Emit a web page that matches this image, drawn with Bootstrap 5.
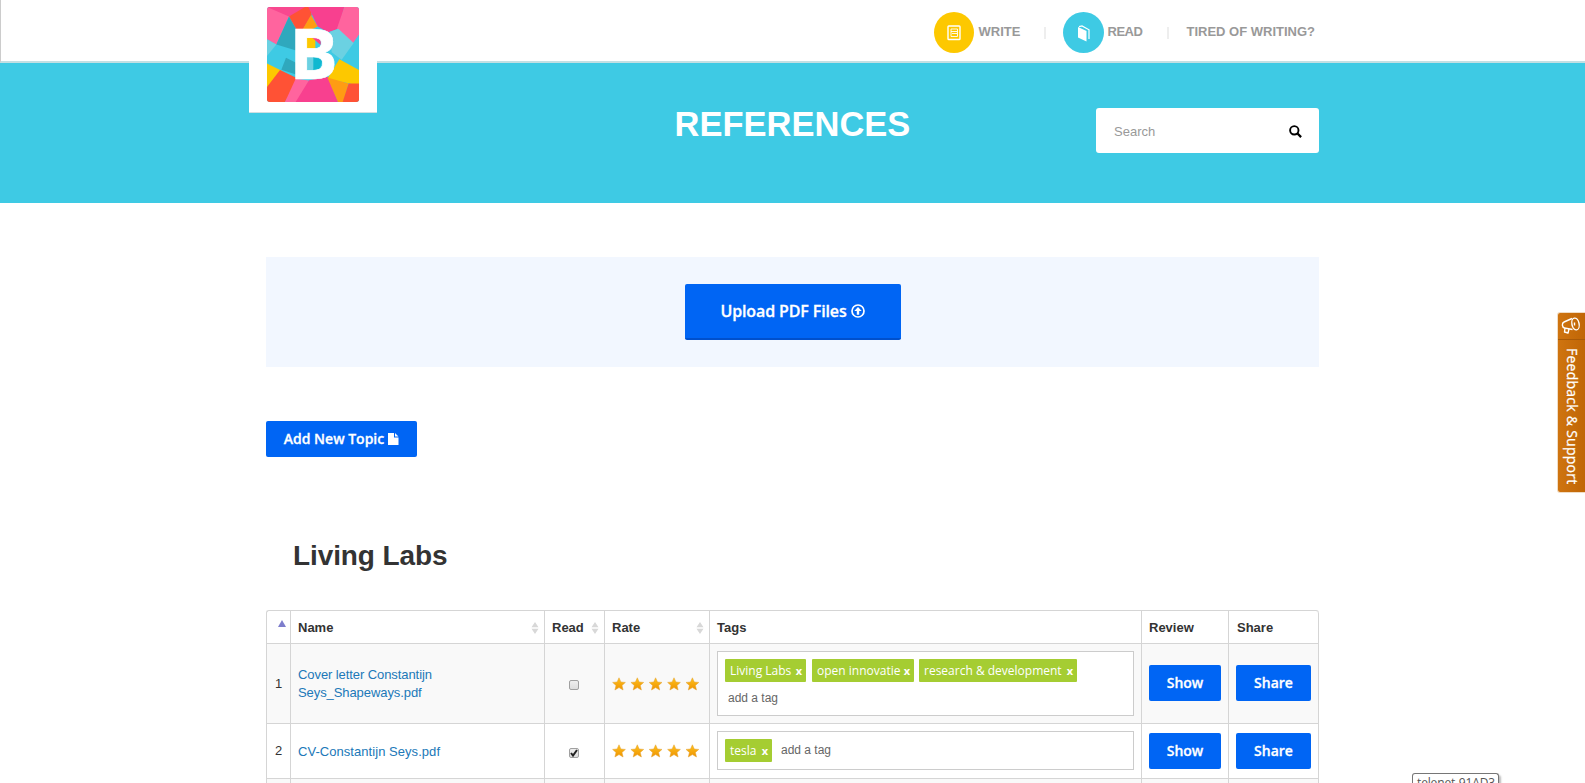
<!DOCTYPE html>
<html lang="en">
<head>
<meta charset="utf-8">
<meta name="viewport" content="width=device-width, initial-scale=1">
<title>References</title>
<link href="https://cdn.jsdelivr.net/npm/bootstrap@5.3.0/dist/css/bootstrap.min.css" rel="stylesheet">
<style>
html{overflow:hidden}
body{font-family:"Liberation Sans",Arial,sans-serif;font-size:13px;line-height:18px;color:#333;height:783px;overflow:hidden;background:#fff}
.wrap{width:1053px;margin:0 auto}
.topbar{height:63px;border-bottom:2px solid #c3dfe3;border-left:1px solid #ccc}
.brand-box{width:128px;height:113px;left:249px;top:0;border-bottom:1px solid #cfdfe2;background:#fff;padding:7px 0 0 18px}
.brand-box svg{display:block}
.menu{padding-left:667px}
.menu a{color:#999;font-weight:700;text-decoration:none;line-height:64px;white-space:nowrap;height:63px;gap:5px;display:flex;align-items:center}
.menu svg{display:block;margin-top:2px}
.menu i{width:2px;height:12px;background:#eee;align-self:center;margin-top:2px}
.menu .m-write{width:110px}
.menu .m-read{width:104px;margin-left:17px;gap:4px;letter-spacing:-.5px}
.menu .m-tired{margin-left:18px}
.hero{height:140px;background:#3ecae4}
.hero h1{font-size:34.500px;font-weight:700;line-height:40px;color:#fff;padding-top:41px}
.search{width:223px;height:45px;right:0;top:45px;border-radius:3px;background:#fff;color:#999;padding:2px 17px 0 18px}
.upload-area{height:110px;margin-top:54px;background:#f2f7ff}
.act{background:#0065f4;color:#fff;font-family:"Open Sans",sans-serif;font-weight:600;-webkit-text-stroke:.3px #fff;font-size:14px;line-height:20px;border:0;border-radius:2px;padding:0;height:36px;display:flex;align-items:center;justify-content:center;white-space:nowrap}
.act:hover{background:#0058d6;color:#fff}
.act-lg{width:216px;height:56px;font-size:16px;border-bottom:2px solid #0050cc;gap:4px;letter-spacing:-.12px}
.act-topic{width:151px;gap:4px;margin-top:54px}
h2{font-size:28px;font-weight:700;line-height:34px;margin:82px 0 0 27px;color:#333;letter-spacing:-.1px}
.refs{width:1053px;table-layout:fixed;border-collapse:separate;border-spacing:0;border:1px solid #d5d5d5;border-width:1px 0 0 1px;border-radius:3px 3px 0 0;margin-top:37px}
.refs th,.refs td{border:1px solid #d5d5d5;border-width:0 1px 1px 0;padding:0 7px;vertical-align:middle}
.refs th{height:33px;padding-top:1px}
.refs .r1 td{height:80px;background:#f9f9f9}
.refs .r2 td{height:55px}
.refs .r3 td{height:60px;background:#f9f9f9}
.refs th:last-child{border-top-right-radius:3px;padding-left:8px}
.refs td.c-tags{vertical-align:top;padding-top:7px}
.refs .r1 .act{margin-top:-1px}
.refs a{color:#2078b8;text-decoration:none}
.refs .r1 a{letter-spacing:-.08px}
.refs .r2 a{letter-spacing:.05px;position:relative;top:1px}
.refs .sorter{margin-right:-2px}
.refs .asc{margin:-7px 0 0 11px}
.tagbox{border:1px solid #ccc;background:#fff;padding:7px;display:flex;flex-wrap:wrap;align-items:flex-start;align-content:flex-start;font-size:12px;width:417px}
.tagbox.tall{height:65px}
.tagbox.short{height:39px}
.tg{background:#a5cd32;color:#fff;font-family:"Open Sans",sans-serif;height:23px;line-height:23px;padding:0 4px 0 5px;display:flex;justify-content:space-between;border-radius:1px;white-space:nowrap}
.tg b{font-size:11px;line-height:24px}
.addtag{color:#666;line-height:16px;padding:3px 0 0 9px}
.tall .addtag{padding:8px 0 0 3px}
.box{width:10px;height:10px;border:1px solid #a0a0a0;border-radius:2px;background:linear-gradient(#eee,#ddd);margin:3px 0 0 17px;display:block}
.box svg{display:block;overflow:visible}
.feedback{right:0;top:313px;width:27px;height:179px;background:linear-gradient(90deg,#cf7410,#c06606);box-shadow:0 0 0 1px #f0dcc4;color:#fff;border-radius:2px 0 0 2px}
.feedback div{height:27px;border-bottom:1px solid #a85a08}
.feedback span{writing-mode:vertical-rl;font-family:"Open Sans",sans-serif;font-size:14px;line-height:29px;-webkit-text-stroke:.25px #fff;padding-top:8px;white-space:nowrap;letter-spacing:.25px}
.tip{left:1412px;top:773px;width:87px;height:10px;border:1px solid #767676;border-bottom:0;border-radius:3px 3px 0 0;background:#fff;color:#555;font:12px/15px "Open Sans",sans-serif;padding:1px 4px;white-space:nowrap;box-shadow:2px 2px 2px #bbb;letter-spacing:-.15px}
</style>
</head>
<body class="position-relative">
<svg class="position-absolute" width="0" height="0">
  <defs>
  <symbol id="sort" viewBox="0 0 8 12"><path fill="#d8d8d8" d="M4 0 7.500 5.300H.5zM4 12 .5 6.700h7z"/></symbol>
  <linearGradient id="gold" x2="0" y2="1"><stop stop-color="#ffc21f"/><stop offset="1" stop-color="#ee9300"/></linearGradient>
  <symbol id="stars" viewBox="0 0 88 14">
    <g fill="url(#gold)" stroke="#e3a335" stroke-width=".5">
      <path id="star" d="m7 .8 1.900 4.200 4.500.4-3.400 3 1.100 4.600L7 10.600 2.900 13 4 8.400.6 5.400l4.500-.4z"/>
      <use href="#star" x="18.300"/><use href="#star" x="36.600"/><use href="#star" x="55"/><use href="#star" x="73.400"/>
    </g>
  </symbol>
  </defs>
</svg>

<header class="topbar">
  <nav class="wrap menu d-flex">
    <a href="#" class="m-write">
      <svg width="40" height="41" viewBox="0 0 40 41"><ellipse cx="20" cy="20.500" rx="20" ry="20.500" fill="#fdc800"/><g fill="none" stroke="#fff"><rect x="14" y="14" width="12" height="13.500" rx=".8" stroke-width="1.400"/><path d="M17 17h6.500v7.500H17zM17 19.500h6M18 21.500h5" stroke-width=".9"/></g></svg>WRITE</a>
    <i></i>
    <a href="#" class="m-read">
      <svg width="41" height="41" viewBox="0 0 41 41"><circle cx="20.500" cy="20.500" r="20.500" fill="#3ecae4"/><path fill="#fff" d="m15 15 8.500 4v10.500L15 25.500z"/><path fill="none" stroke="#fff" stroke-width="1.200" d="m16 14.700 3-.7 7 3.800V27"/></svg>READ</a>
    <i></i>
    <a href="#" class="m-tired">TIRED OF WRITING?</a>
  </nav>
</header>
<div class="brand-box position-absolute">
  <svg width="92" height="95" viewBox="81 22 276 283" preserveAspectRatio="none">
    <defs><clipPath id="rc"><rect x="81" y="22" width="276" height="283" rx="8"/></clipPath></defs>
    <g clip-path="url(#rc)">
      <path fill="#3ecae4" d="M81 22h276v283H81z"/>
      <path fill="#ff649e" d="M81 22h130l-64 28-38 84-28-16z"/>
      <path fill="#f8488f" d="M81 22h118l-8 14-44 14z"/>
      <path fill="#2fa8bd" d="m147 50 24 42v60l-62-18z"/>
      <path fill="#ff5235" d="m147 50 48-28h16l4 24-26 42h-20z"/>
      <path fill="#ff9c13" d="m213 46 20 34-25 12h-22z"/>
      <path fill="#f8408f" d="M205 22h108l-18 65-30 10-32-17z"/>
      <path fill="#ff649e" d="M313 22h44v82l-20 28-46-46z"/>
      <path fill="#6bd1e2" d="m270 96 25-9 46 42-36 50-30-22z"/>
      <path fill="#6bd1e2" d="m81 118 28 16-28 34z"/>
      <path fill="#2fa8bd" d="m138 173 30 15v35l-44-14z"/>
      <path fill="#fdc800" d="m81 190 44 22-44 50zM298 178l59 32v46l-95-20z"/>
      <path fill="#ff5235" d="m120 210 55 26-40 69H81v-45z"/>
      <path fill="#ff649e" d="m167 236 40 5-30 64h-42z"/>
      <path fill="#f8408f" d="m207 240 57-10 30 75H167z"/>
      <path fill="#ff9c13" d="m262 232 64 18-16 55h-16z"/>
      <path fill="#ff5235" d="M326 250h31v55h-49z"/>
      <path fill="#fdc800" d="M198 112h28v36h-28z"/><path fill="#f8408f" d="m215 112 27-2v25z"/><path fill="#6bd1e2" d="M198 170h26v42h-26z"/><path fill="#10b8d0" d="m220 170 27 10-8 28-19 2z"/>
      <text x="148" y="237" font-family="Open Sans" font-weight="700" font-size="209" fill="#fff" stroke="#fff" stroke-width="2" textLength="146" lengthAdjust="spacingAndGlyphs">B</text>
    </g>
  </svg>
</div>

<section class="hero">
  <div class="wrap position-relative">
    <h1 class="text-center m-0">REFERENCES</h1>
    <div class="search position-absolute d-flex align-items-center justify-content-between"><span>Search</span>
      <svg width="13" height="13" viewBox="0 0 13 13"><g fill="none" stroke="#000"><circle cx="5.300" cy="5.300" r="4.200" stroke-width="1.900"/><path d="m8.500 8.500 3.600 3.600" stroke-width="2.300"/></g></svg></div>
  </div>
</section>

<main class="wrap">
  <div class="upload-area d-flex align-items-center justify-content-center">
    <button class="btn act act-lg" type="button">Upload PDF Files
      <svg width="14" height="14" viewBox="0 0 14 14"><circle cx="7" cy="7" r="6" fill="none" stroke="#fff" stroke-width="1.700"/><path fill="#fff" d="m7 3 3.700 4H8.200v3.700H5.800V7H3.300z"/></svg></button>
  </div>
  <button class="btn act act-topic" type="button">Add New Topic
    <svg width="11" height="12" viewBox="0 0 11 12"><path fill="#fff" d="M0 0h6v4.500h4.500V12H0zM7 0l3.500 3.500H7z"/></svg></button>
  <h2>Living Labs</h2>

  <table class="refs">
    <colgroup><col style="width:24px"><col style="width:254px"><col style="width:60px"><col style="width:105px"><col style="width:432px"><col style="width:87px"><col style="width:90px"></colgroup>
    <thead><tr>
      <th class="p-0"><svg class="d-block asc" width="8" height="7" viewBox="0 0 8 7"><path fill="#7d7dcc" d="m4 0 4 7H0z"/></svg></th>
      <th><div class="d-flex justify-content-between align-items-center">Name<svg class="sorter" width="8" height="12"><use href="#sort"/></svg></div></th>
      <th><div class="d-flex justify-content-between align-items-center">Read<svg class="sorter" width="8" height="12"><use href="#sort"/></svg></div></th>
      <th><div class="d-flex justify-content-between align-items-center">Rate<svg class="sorter" width="8" height="12"><use href="#sort"/></svg></div></th>
      <th>Tags</th><th>Review</th><th>Share</th>
    </tr></thead>
    <tbody>
      <tr class="r1">
        <td class="p-0 text-center">1</td>
        <td><a href="#">Cover letter Constantijn<br>Seys_Shapeways.pdf</a></td>
        <td><span class="box"></span></td>
        <td><svg class="d-block" width="88" height="14"><use href="#stars"/></svg></td>
        <td class="c-tags"><div class="tagbox tall">
          <span class="tg" style="width:81px">Living Labs<b>x</b></span>
          <span class="tg" style="width:102px;margin-left:6px">open innovatie<b>x</b></span>
          <span class="tg" style="width:158px;margin-left:5px">research &amp; development<b>x</b></span>
          <span class="addtag w-100">add a tag</span></div></td>
        <td><button class="btn act w-100" type="button">Show</button></td>
        <td><button class="btn act w-100" type="button">Share</button></td>
      </tr>
      <tr class="r2">
        <td class="p-0 text-center">2</td>
        <td><a href="#">CV-Constantijn Seys.pdf</a></td>
        <td><span class="box"><svg width="8" height="8" viewBox="0 0 8 8"><path d="m1 4 2 2.500L7 1" fill="none" stroke="#222" stroke-width="2"/></svg></span></td>
        <td><svg class="d-block" width="88" height="14"><use href="#stars"/></svg></td>
        <td class="c-tags"><div class="tagbox short">
          <span class="tg" style="width:47px">tesla<b>x</b></span>
          <span class="addtag">add a tag</span></div></td>
        <td><button class="btn act w-100" type="button">Show</button></td>
        <td><button class="btn act w-100" type="button">Share</button></td>
      </tr>
      <tr class="r3"><td></td><td></td><td></td><td></td><td></td><td></td><td></td></tr>
    </tbody>
  </table>
</main>

<aside class="feedback position-absolute">
  <div><svg class="d-block" width="26" height="26" viewBox="0 0 26 26"><g fill="none" stroke="#fff" stroke-width="1.400" stroke-linejoin="round"><path d="M14 5.500 6 9c-2.500 1-2 5.500.5 6l8 1.500"/><ellipse cx="17.500" cy="11" rx="3.600" ry="6" transform="rotate(-12 17.500 11)"/><path d="m7 15-.5 4 3.500 1 1-4M16.500 9.500v3"/></g></svg></div>
  <span>Feedback &amp; Support</span>
</aside>
<div class="tip position-absolute">telenet-91AD3</div>
<script src="https://cdn.jsdelivr.net/npm/bootstrap@5.3.0/dist/js/bootstrap.bundle.min.js"></script>
</body>
</html>
